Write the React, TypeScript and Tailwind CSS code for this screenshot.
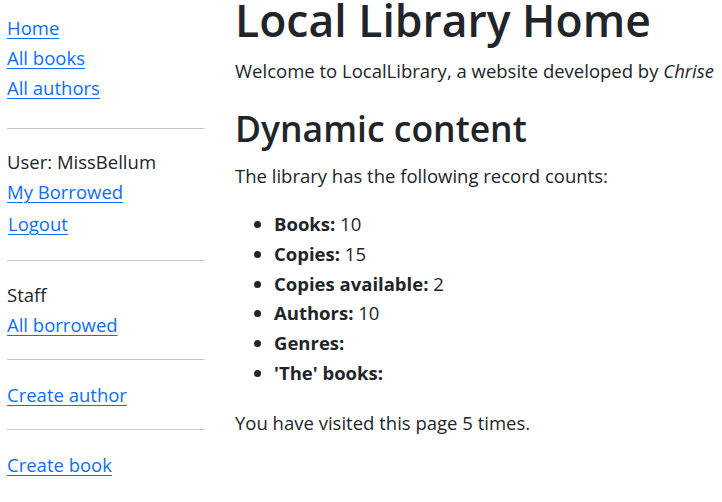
import React from "react";

const font = { fontFamily: '"Open Sans", "Noto Sans", sans-serif' };

function NavLink({ children, className = "" }: { children: React.ReactNode; className?: string }) {
  return (
    <a href="#" className={`block text-[#0d6efd] underline decoration-1 underline-offset-[3px] ${className}`}>
      {children}
    </a>
  );
}

function Divider({ className = "" }: { className?: string }) {
  return <hr className={`border-0 border-t border-[#c8c9ca] ${className}`} />;
}

const counts: { label: string; value: string }[] = [
  { label: "Books:", value: "10" },
  { label: "Copies:", value: "15" },
  { label: "Copies available:", value: "2" },
  { label: "Authors:", value: "10" },
  { label: "Genres:", value: "" },
  { label: "'The' books:", value: "" },
];

export default function App() {
  return (
    <div
      style={font}
      className="flex w-[722px] h-[502px] overflow-hidden bg-white text-[#212529] text-[18.5px] leading-[30px]"
    >
      {/* sidebar */}
      <nav className="w-[205px] shrink-0 pl-[7px] pt-[13px]">
        <NavLink>Home</NavLink>
        <NavLink>All books</NavLink>
        <NavLink>All authors</NavLink>
        <Divider className="mt-[25px]" />
        <div className="mt-[18px]">User: MissBellum</div>
        <NavLink>My Borrowed</NavLink>
        <NavLink className="mt-[2px] ml-px">Logout</NavLink>
        <Divider className="mt-[21px]" />
        <div className="mt-[19px]">Staff</div>
        <NavLink>All borrowed</NavLink>
        <Divider className="mt-[19px]" />
        <NavLink className="mt-[20px]">Create author</NavLink>
        <Divider className="mt-[19px]" />
        <NavLink className="mt-[20px]">Create book</NavLink>
      </nav>

      {/* main content */}
      <main className="flex-1 min-w-0 pl-[30px]">
        <h1 className="-mt-[4px] text-[44.5px] font-semibold leading-[48px] whitespace-nowrap">Local Library Home</h1>
        <p className="mt-[12px] whitespace-nowrap">
          Welcome to LocalLibrary, a website developed by <em>Chrise</em>
        </p>
        <h2 className="mt-[22px] text-[35.5px] font-semibold leading-[40px]">Dynamic content</h2>
        <p className="mt-[13px]">The library has the following record counts:</p>
        <ul className="mt-[18px] list-disc pl-[39px] leading-[29.8px]">
          {counts.map((c) => (
            <li key={c.label}>
              <strong className="font-bold">{c.label}</strong>
              {c.value && ` ${c.value}`}
            </li>
          ))}
        </ul>
        <p className="mt-[20px]">You have visited this page 5 times.</p>
      </main>
    </div>
  );
}
